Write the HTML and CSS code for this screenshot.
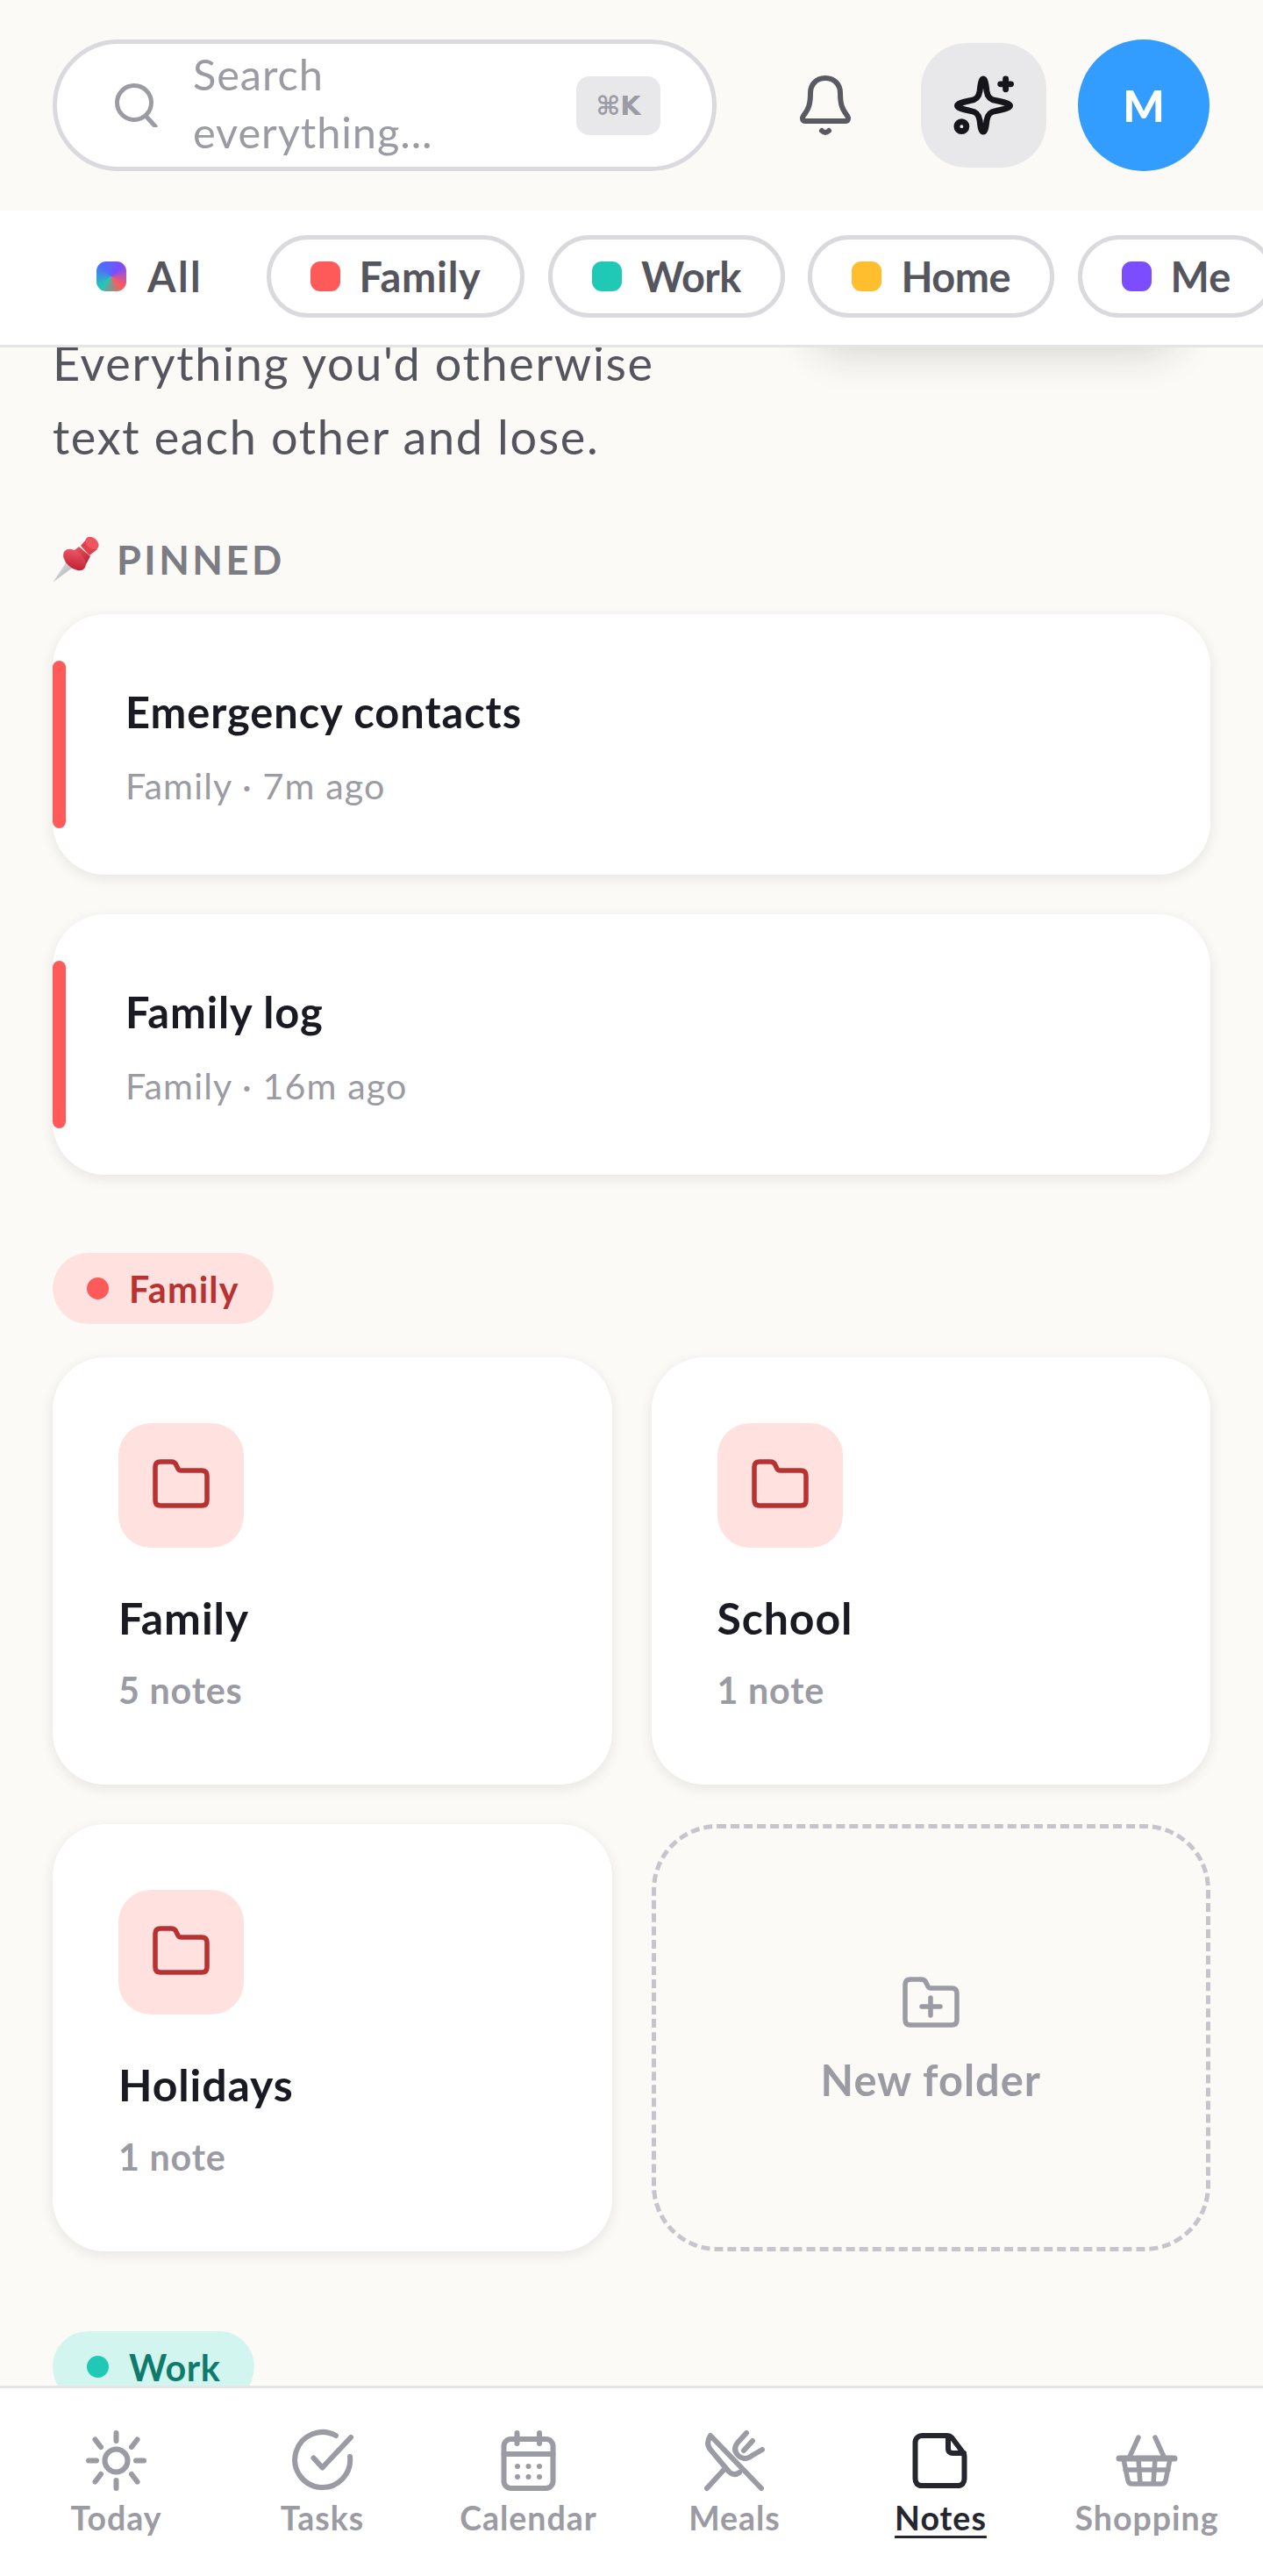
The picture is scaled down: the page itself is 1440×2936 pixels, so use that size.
FILE: index.html
```html
<!DOCTYPE html>
<html lang="en">
<head>
<meta charset="utf-8">
<title>Notes</title>
<link rel="stylesheet" href="styles.css">
</head>
<body>
<header class="topbar">
  <div class="search">
    <svg class="search-icon" viewBox="0 0 50 50" fill="none" stroke="#9b9ba3" stroke-width="5" stroke-linecap="round"><circle cx="23" cy="22" r="19.5"/><path d="M36 37l11 12"/></svg>
    <span class="search-text">Search everything...</span>
    <kbd class="kbd">⌘K</kbd>
  </div>
  <button class="bell" aria-label="Notifications">
    <svg class="bell-icon" viewBox="0 0 62 69" fill="none" stroke="#5a5a63" stroke-width="6" stroke-linejoin="round" stroke-linecap="round"><path d="M31 3C20 3 14 11 14 20C14 33 12 38 6 46C4 49 5 52 8 52H54C57 52 58 49 56 46C50 38 48 33 48 20C48 11 42 3 31 3Z"/><path d="M27 63Q31 67 35 63"/></svg>
  </button>
  <button class="ai" aria-label="Assistant">
    <svg class="ai-icon" viewBox="0 0 69 69" fill="none" stroke="#15151b" stroke-width="7" stroke-linejoin="round" stroke-linecap="round"><path d="M34 4C36 4 37 9 38 18C39 25 42 28 49 29C59 31 65 33 65 35C65 37 59 39 49 41C42 42 39 45 38 52C37 61 36 65 34 65C32 65 31 61 30 52C29 45 26 42 19 41C9 39 4 37 4 35C4 33 9 31 19 29C26 28 29 25 30 18C31 9 32 4 34 4Z"/><path d="M60 4V16M54 10H66"/><circle cx="9" cy="59" r="5.5"/></svg>
  </button>
  <div class="avatar">M</div>
</header>

<nav class="filters">
  <a class="chip chip-plain"><i class="swatch swatch-all"></i>All</a>
  <a class="chip chip-family"><i class="swatch swatch-family"></i>Family</a>
  <a class="chip chip-tight"><i class="swatch swatch-work"></i>Work</a>
  <a class="chip chip-tight"><i class="swatch swatch-home"></i>Home</a>
  <a class="chip"><i class="swatch swatch-me"></i>Me</a>
</nav>

<main class="content">
  <div class="fab-shadow"></div>
  <p class="intro">Everything you'd otherwise<br>text each other and lose.</p>

  <h2 class="section-label">
    <svg class="pin" viewBox="0 0 53 52">
      <defs>
        <linearGradient id="pinred" x1="0" y1="0" x2="1" y2="1"><stop offset="0" stop-color="#f4606c"/><stop offset="1" stop-color="#b8172c"/></linearGradient>
        <linearGradient id="pinsteel" x1="0" y1="0" x2="1" y2="1"><stop offset="0" stop-color="#eceef0"/><stop offset="1" stop-color="#9ea2a8"/></linearGradient>
      </defs>
      <path d="M0.500 51.500L16 28L24 34Z" fill="url(#pinsteel)"/>
      <path d="M30 11L43 22L37 33L20 19Z" fill="url(#pinred)"/>
      <ellipse cx="25" cy="26" rx="15" ry="9.500" transform="rotate(42 25 26)" fill="url(#pinred)"/>
      <path d="M32 10L39 2L51 14L42 21Z" fill="#e23f4c"/>
      <ellipse cx="45" cy="7" rx="8.500" ry="6" transform="rotate(42 45 7)" fill="#ee5561"/>
    </svg>
    <span>PINNED</span>
  </h2>

  <article class="note">
    <h3 class="note-title">Emergency contacts</h3>
    <p class="note-meta">Family · 7m ago</p>
  </article>
  <article class="note">
    <h3 class="note-title">Family log</h3>
    <p class="note-meta">Family · 16m ago</p>
  </article>

  <div class="badge badge-family"><i class="badge-dot"></i>Family</div>
  <section class="folders">
    <article class="folder">
      <div class="tile"><svg class="folder-icon" viewBox="0 0 65 56" fill="none" stroke="#b83232" stroke-width="5.5" stroke-linejoin="round"><path d="M3 9C3 5 5 3 9 3H21C24 3 26 4 27 7L29 11C30 13 31 13 33 13H56C60 13 62 15 62 19V47C62 51 60 53 56 53H9C5 53 3 51 3 47Z"/></svg></div>
      <h3 class="folder-name">Family</h3>
      <p class="folder-count">5 notes</p>
    </article>
    <article class="folder">
      <div class="tile"><svg class="folder-icon" viewBox="0 0 65 56" fill="none" stroke="#b83232" stroke-width="5.5" stroke-linejoin="round"><path d="M3 9C3 5 5 3 9 3H21C24 3 26 4 27 7L29 11C30 13 31 13 33 13H56C60 13 62 15 62 19V47C62 51 60 53 56 53H9C5 53 3 51 3 47Z"/></svg></div>
      <h3 class="folder-name">School</h3>
      <p class="folder-count">1 note</p>
    </article>
    <article class="folder">
      <div class="tile"><svg class="folder-icon" viewBox="0 0 65 56" fill="none" stroke="#b83232" stroke-width="5.5" stroke-linejoin="round"><path d="M3 9C3 5 5 3 9 3H21C24 3 26 4 27 7L29 11C30 13 31 13 33 13H56C60 13 62 15 62 19V47C62 51 60 53 56 53H9C5 53 3 51 3 47Z"/></svg></div>
      <h3 class="folder-name">Holidays</h3>
      <p class="folder-count">1 note</p>
    </article>
    <button class="new-folder">
      <svg class="folder-icon" viewBox="0 0 65 58" fill="none" stroke="#9b9ba3" stroke-width="5.5" stroke-linejoin="round" stroke-linecap="round"><path d="M3 9C3 5 5 3 9 3H21C24 3 26 4 27 7L29 11C30 13 31 13 33 13H56C60 13 62 15 62 19V49C62 53 60 55 56 55H9C5 55 3 53 3 49Z"/><path d="M32 24V44M22 34H43"/></svg>
      <span>New folder</span>
    </button>
  </section>

  <div class="badge badge-work"><i class="badge-dot"></i>Work</div>
</main>

<footer class="tabbar">
  <a class="tab">
    <svg class="tab-icon" viewBox="0 0 75 75" fill="none" stroke="currentColor" stroke-width="6" stroke-linecap="round" stroke-linejoin="round"><circle cx="37.5" cy="37.5" r="13"/><path d="M37.5 6V15M37.5 60V69M6 37.5H15M60 37.5H69M13.5 13.5L20 22M55 53L61.5 61.5M61.5 13.5L55 22M20 53L13.5 61.5"/></svg>
    <span>Today</span>
  </a>
  <a class="tab">
    <svg class="tab-icon" viewBox="0 0 75 75" fill="none" stroke="currentColor" stroke-width="6" stroke-linecap="round" stroke-linejoin="round"><path d="M53 9A31.5 31.5 0 1 0 69 33"/><path d="M27.5 34.5L37.5 45.5L70 11"/></svg>
    <span>Tasks</span>
  </a>
  <a class="tab">
    <svg class="tab-icon" viewBox="0 0 75 75" fill="none" stroke="currentColor" stroke-width="6" stroke-linecap="round" stroke-linejoin="round"><rect x="9.5" y="13" width="56" height="56" rx="8"/><path d="M9.5 30H65.5M24.5 6V18M50 6V18"/><g fill="currentColor" stroke="none"><circle cx="25" cy="44" r="3"/><circle cx="37.5" cy="44" r="3"/><circle cx="50" cy="44" r="3"/><circle cx="25" cy="56" r="3"/><circle cx="37.5" cy="56" r="3"/><circle cx="50" cy="56" r="3"/></g></svg>
    <span>Calendar</span>
  </a>
  <a class="tab">
    <svg class="tab-icon" viewBox="0 0 75 75" fill="none" stroke="currentColor" stroke-width="6" stroke-linecap="round" stroke-linejoin="round"><path d="M68 69L10 9C6 15 6 20 10 25L31 50C35 54 39 54 43 51"/><path d="M6 69L27 46M51 6L41 17C37 22 37 27 42 32C47 36 52 36 57 32L69 25M58 15L48 26"/></svg>
    <span>Meals</span>
  </a>
  <a class="tab tab-active">
    <svg class="tab-icon" viewBox="0 0 75 75" fill="none" stroke="currentColor" stroke-width="6" stroke-linecap="round" stroke-linejoin="round"><path d="M17 9H45C47 9 49 10 50 11L62 27C64 29 64.5 31 64.5 33V58C64.5 63 62 66 57 66H16C11 66 8.5 63 8.5 58V17C8.5 12 12 9 17 9Z"/><path d="M46 10V24C46 27 48 29 51 29H64"/></svg>
    <span>Notes</span>
  </a>
  <a class="tab">
    <svg class="tab-icon" viewBox="0 0 75 75" fill="none" stroke="currentColor" stroke-width="5.5" stroke-linecap="round" stroke-linejoin="round"><path d="M28 11L18 33M47 11L57 33"/><path d="M6 35H69" stroke-width="7"/><path d="M11 36L16 60C16.500 63 18 64 21 64H54C57 64 58.500 63 59 60L64 36M13 48H62M28 36L30 63M47 36L45 63"/></svg>
    <span>Shopping</span>
  </a>
</footer>
</body>
</html>
```

FILE: styles.css
```css
* { box-sizing: border-box; }
html, body { margin: 0; height: 100%; }
body {
  height: 100vh;
  display: flex;
  flex-direction: column;
  overflow: hidden;
  background: #fbfaf6;
  color: #1a1a22;
  font-family: "Lato", "Noto Sans", sans-serif;
}
h2, h3, p { margin: 0; }

.topbar {
  flex: none;
  height: 240px;
  display: flex;
  align-items: center;
  padding: 0 60px;
  background: #fbfaf6;
  position: relative;
  z-index: 2;
}
.search {
  width: 757px;
  height: 150px;
  display: flex;
  align-items: center;
  padding: 0 59px 0 65px;
  background: #fff;
  border: 5px solid #dadade;
  border-radius: 75px;
}
.search-icon { width: 50px; height: 50px; flex: none; margin-right: 40px; }
.search-text {
  flex: 1;
  padding: 0 150px 6px 0;
  font-size: 48.750px;
  line-height: 66px;
  letter-spacing: 0.9px;
  color: #9b9ba3;
}
.kbd {
  flex: none;
  width: 96px;
  height: 67px;
  display: flex;
  align-items: center;
  justify-content: center;
  border-radius: 15px;
  background: #e8e8ea;
  color: #9b9ba3;
  font-family: "DejaVu Sans", sans-serif;
  font-size: 30px;
  font-weight: 700;
}
.bell {
  flex: none;
  margin-left: 93px;
  width: 62px;
  height: 69px;
  padding: 0;
  border: 0;
  background: none;
}
.bell-icon, .ai-icon { display: block; width: 100%; height: 100%; }
.ai {
  flex: none;
  margin-left: 78px;
  width: 143px;
  height: 142px;
  padding: 37px;
  border: 0;
  border-radius: 52px;
  background: #e8e8ea;
}
.avatar {
  flex: none;
  margin-left: 36px;
  width: 150px;
  height: 150px;
  display: flex;
  align-items: center;
  justify-content: center;
  border-radius: 50%;
  background: #339cff;
  color: #fff;
  font-size: 50px;
  font-weight: 900;
}

.filters {
  flex: none;
  height: 156px;
  display: flex;
  align-items: center;
  gap: 26.500px;
  padding: 0 0 3px 60px;
  background: #fff;
  border-bottom: 3px solid #e5e5e7;
  overflow: hidden;
  position: relative;
  z-index: 2;
}
.chip {
  flex: none;
  height: 93.750px;
  display: flex;
  align-items: center;
  gap: 22px;
  padding: 0 45px;
  border: 5px solid #dadade;
  border-radius: 47px;
  color: #55555e;
  font-size: 46.900px;
  font-weight: 700;
}
.chip-plain { gap: 24px; padding-right: 41px; border-color: transparent; letter-spacing: 2.400px; }
.chip-family { letter-spacing: 0.7px; }
.chip-tight { letter-spacing: -0.5px; }
.swatch { flex: none; width: 34px; height: 34px; border-radius: 11px; }
.swatch-all { background: conic-gradient(from 135deg, #ff5a5a, #20c9b5, #4f6cff, #7c4dff, #ff5a5a); }
.swatch-family { background: #ff5a5a; }
.swatch-work { background: #20c9b5; }
.swatch-home { background: #ffbe2e; }
.swatch-me { background: #7c4dff; }

.content {
  flex: 1;
  min-height: 0;
  overflow: hidden;
  position: relative;
  padding: 0 60px;
}
.fab-shadow {
  position: absolute;
  top: -110px;
  right: 90px;
  width: 430px;
  height: 90px;
  border-radius: 45px;
  box-shadow: 0 28px 45px rgba(30, 30, 40, 0.16);
}
.intro {
  margin-top: -24px;
  font-size: 54px;
  line-height: 84px;
  letter-spacing: 1.650px;
  color: #55555e;
}
.section-label {
  display: flex;
  align-items: center;
  height: 56px;
  margin: 70px 0 34px;
  color: #7c7c84;
  font-size: 45px;
  font-weight: 700;
  letter-spacing: 3.500px;
}
.pin { width: 53px; height: 52px; margin-right: 20px; }

.note {
  position: relative;
  height: 297px;
  margin-bottom: 45px;
  padding: 85px 0 0 83px;
  border-radius: 60px;
  background: #fff;
  box-shadow: 0 4px 15px rgba(26, 26, 36, 0.09);
}
.note::before {
  content: "";
  position: absolute;
  left: 0;
  top: 53px;
  width: 15px;
  height: 191px;
  border-radius: 7.500px;
  background: #ff5a5a;
}
.note-title {
  font-size: 48.750px;
  font-weight: 700;
  line-height: 52px;
  letter-spacing: 0.94px;
  color: #1a1a22;
}
.note-meta {
  margin-top: 32px;
  font-size: 41.250px;
  line-height: 52px;
  letter-spacing: 1.100px;
  color: #9b9ba3;
}

.badge {
  display: flex;
  width: fit-content;
  align-items: center;
  height: 81px;
  padding: 0 39px;
  border-radius: 41px;
  font-size: 41.250px;
  font-weight: 700;
}
.badge-family { gap: 23px; margin-top: 89px; background: #ffe2e0; color: #b83232; letter-spacing: 1.200px; }
.badge-work { gap: 23px; margin-top: 91px; background: #d2f5ef; color: #0f7b6c; letter-spacing: 0.6px; }
.badge-dot { flex: none; width: 25px; height: 25px; border-radius: 50%; }
.badge-family .badge-dot { background: #ff5a5a; }
.badge-work .badge-dot { background: #20c9b5; }

.folders {
  display: grid;
  grid-template-columns: 1fr 1fr;
  grid-auto-rows: 487px;
  gap: 45px;
  margin-top: 38px;
}
.folder {
  padding: 75px;
  border-radius: 60px;
  background: #fff;
  box-shadow: 0 4px 15px rgba(26, 26, 36, 0.09);
}
.tile {
  width: 143px;
  height: 142px;
  display: flex;
  align-items: center;
  justify-content: center;
  border-radius: 37px;
  background: #ffe2e0;
}
.folder-icon { display: block; width: 65px; height: 56px; margin-bottom: 4px; }
.folder-name {
  margin-top: 50px;
  font-size: 50px;
  font-weight: 700;
  line-height: 60px;
  letter-spacing: 0.9px;
}
.folder-count {
  margin-top: 26px;
  font-size: 41.250px;
  font-weight: 700;
  line-height: 52px;
  letter-spacing: 0.8px;
  color: #9b9ba3;
}
.new-folder {
  display: flex;
  flex-direction: column;
  align-items: center;
  justify-content: center;
  gap: 28px;
  padding: 8px 0 0;
  border: 5px dashed #c5c5cb;
  border-radius: 75px;
  background: none;
  color: #9b9ba3;
  font-family: inherit;
  font-size: 48.750px;
  font-weight: 700;
  letter-spacing: 1px;
}
.new-folder .folder-icon { height: 58px; margin: 0; transform: translateY(-2px); }

.tabbar {
  flex: none;
  height: 217px;
  display: flex;
  padding: 45px 15px 0;
  background: #fff;
  border-top: 3px solid #e5e5e7;
  position: relative;
  z-index: 2;
}
.tab {
  flex: 1;
  display: flex;
  flex-direction: column;
  align-items: center;
  color: #9b9ba3;
  font-size: 37.500px;
  font-weight: 700;
  line-height: 52px;
  letter-spacing: 1px;
}
.tab-icon { display: block; width: 75px; height: 75px; margin-bottom: 2px; }
.tab-active { color: #26262e; }
.tab-active span { text-decoration: underline; text-decoration-thickness: 3px; text-underline-offset: 6px; }
```
